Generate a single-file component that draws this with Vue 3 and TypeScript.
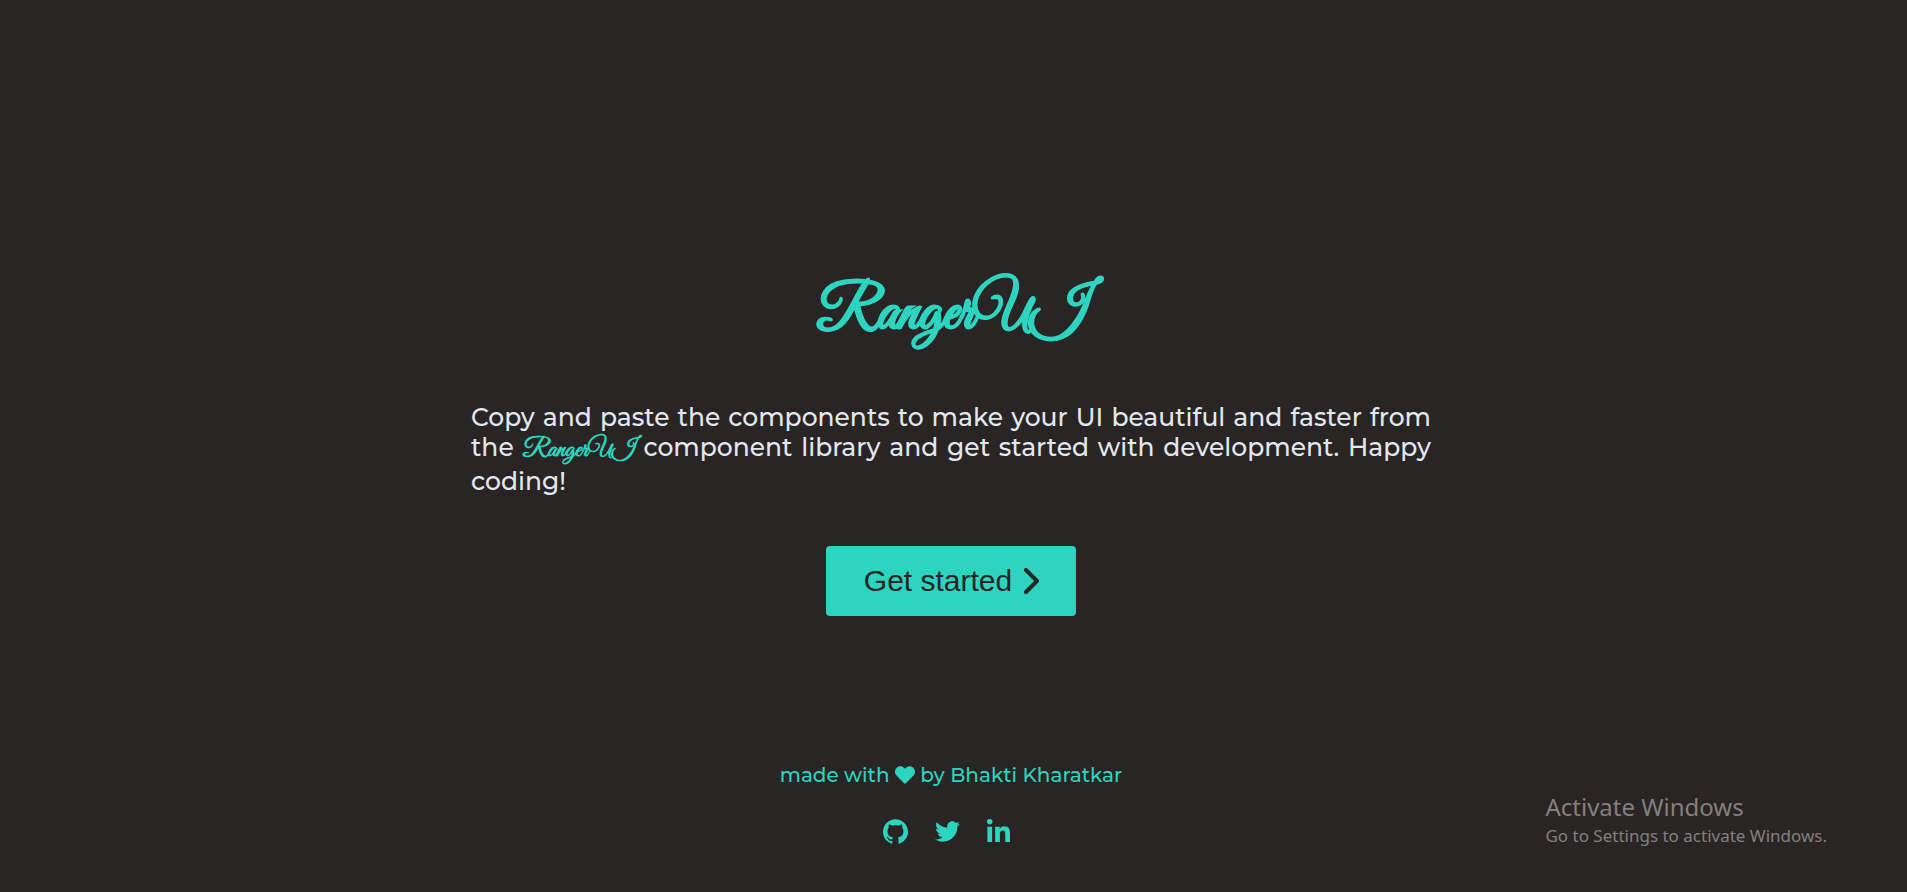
<script setup lang="ts">
interface SocialLink {
  name: string
  href: string
  viewBox: string
  path: string
}

const socials: SocialLink[] = [
  {
    name: 'GitHub',
    href: '#github',
    viewBox: '0 0 24 24',
    path: 'M12 .297c-6.63 0-12 5.373-12 12 0 5.303 3.438 9.8 8.205 11.385.6.113.82-.258.82-.577 0-.285-.01-1.04-.015-2.04-3.338.724-4.042-1.61-4.042-1.61C4.422 18.07 3.633 17.7 3.633 17.7c-1.087-.744.084-.729.084-.729 1.205.084 1.838 1.236 1.838 1.236 1.07 1.835 2.809 1.305 3.495.998.108-.776.417-1.305.76-1.605-2.665-.3-5.466-1.332-5.466-5.93 0-1.31.465-2.38 1.235-3.22-.135-.303-.54-1.523.105-3.176 0 0 1.005-.322 3.3 1.23.96-.267 1.98-.399 3-.405 1.02.006 2.04.138 3 .405 2.28-1.552 3.285-1.23 3.285-1.23.645 1.653.24 2.873.12 3.176.765.84 1.23 1.91 1.23 3.22 0 4.61-2.805 5.625-5.475 5.92.42.36.81 1.096.81 2.22 0 1.606-.015 2.896-.015 3.286 0 .315.21.69.825.57C20.565 22.092 24 17.592 24 12.297c0-6.627-5.373-12-12-12',
  },
  {
    name: 'Twitter',
    href: '#twitter',
    viewBox: '0 0 512 512',
    path: 'M459.37 151.716c.325 4.548.325 9.097.325 13.645 0 138.72-105.583 298.558-298.558 298.558-59.452 0-114.68-17.219-161.137-47.106 8.447.974 16.568 1.299 25.34 1.299 49.055 0 94.213-16.568 130.274-44.832-46.132-.975-84.792-31.188-98.112-72.772 6.498.974 12.995 1.624 19.818 1.624 9.421 0 18.843-1.3 27.614-3.573-48.081-9.747-84.143-51.98-84.143-102.985v-1.299c13.969 7.797 30.214 12.67 47.431 13.319-28.264-18.843-46.781-51.005-46.781-87.391 0-19.492 5.197-37.36 14.294-52.954 51.655 63.675 129.3 105.258 216.365 109.807-1.624-7.797-2.599-15.918-2.599-24.04 0-57.828 46.782-104.934 104.934-104.934 30.213 0 57.502 12.67 76.67 33.137 23.715-4.548 46.456-13.32 66.599-25.34-7.798 24.366-24.366 44.833-46.132 57.827 21.117-2.273 41.584-8.122 60.426-16.243-14.292 20.791-32.161 39.308-52.628 54.253z',
  },
  {
    name: 'LinkedIn',
    href: '#linkedin',
    viewBox: '0 0 448 448',
    path: 'M100.28 448H7.4V148.9h92.88zM53.79 108.1C24.09 108.1 0 83.5 0 53.8a53.79 53.79 0 0 1 107.58 0c0 29.7-24.1 54.3-53.79 54.3zM447.9 448h-92.68V302.4c0-34.7-.7-79.2-48.29-79.2-48.29 0-55.69 37.7-55.69 76.7V448h-92.78V148.9h89.08v40.8h1.3c12.4-23.5 42.69-48.3 87.88-48.3 94 0 111.28 61.9 111.28 142.3V448z',
  },
]
</script>

<template>
  <div class="page">
    <main class="hero">
      <h1 class="logo">RangerUI</h1>
      <p class="intro">
        Copy and paste the components to make your UI beautiful and faster from
        the <span class="brand">RangerUI</span> component library and get started with
        development. Happy coding!
      </p>
      <button class="cta" type="button">
        Get started
        <svg class="chevron" viewBox="0 0 16 26" aria-hidden="true">
          <path d="M2 2l11 11-11 11" />
        </svg>
      </button>
    </main>

    <footer class="footer">
      <p class="credit">
        made with
        <svg class="heart" viewBox="0 0 512 512" role="img" aria-label="love">
          <path d="M462.3 62.6C407.5 15.9 326 24.3 275.7 76.2L256 96.5l-19.7-20.3C186.1 24.3 104.5 15.9 49.7 62.6c-62.8 53.6-66.1 149.8-9.9 207.9l193.5 199.8c12.5 12.9 32.8 12.9 45.3 0l193.5-199.8c56.3-58.1 53-154.3-9.8-207.9z" />
        </svg>
        by Bhakti Kharatkar
      </p>
      <nav class="socials" aria-label="Social links">
        <a v-for="item in socials" :key="item.name" :href="item.href" :aria-label="item.name">
          <svg :class="item.name.toLowerCase()" :viewBox="item.viewBox" aria-hidden="true"><path :d="item.path" /></svg>
        </a>
      </nav>
    </footer>

    <aside class="notice">
      <p class="notice-title">Activate Windows</p>
      <p class="notice-text">Go to Settings to activate Windows.</p>
    </aside>
  </div>
</template>

<style>
body {
  margin: 0;
  background: #292524;
}
</style>

<style scoped>
.page {
  box-sizing: border-box;
  position: relative;
  display: flex;
  flex-direction: column;
  align-items: center;
  min-height: 100vh;
  padding: 271px 5px 40px 0;
  background: #292524;
  color: #e2e8f0;
  font-family: Montserrat, Inter, sans-serif;
  font-weight: 500;
}

.hero {
  display: flex;
  flex-direction: column;
  align-items: center;
  width: 100%;
}

.logo,
.brand {
  color: #2dd4bf;
  font-family: "Great Vibes", "Liberation Serif", cursive;
  font-weight: 700;
}

.logo {
  margin: 0;
  font-size: 60px;
  line-height: 88px;
  -webkit-text-stroke: 1px currentColor;
}

.intro {
  width: 100%;
  max-width: 960px;
  margin: 43px 0 50px;
  font-size: 25px;
  line-height: normal;
  text-align: justify;
}

.cta {
  display: flex;
  align-items: center;
  gap: 12px;
  height: 70px;
  padding: 0 36px 0 38px;
  border: 0;
  border-radius: 4px;
  background: #2dd4bf;
  color: #292524;
  font-family: "Liberation Sans", Arial, sans-serif;
  font-size: 30px;
  cursor: pointer;
}

.chevron {
  width: 16px;
  height: 26px;
  fill: none;
  stroke: currentColor;
  stroke-width: 4;
  stroke-linecap: round;
  stroke-linejoin: round;
}

.footer {
  display: flex;
  flex-direction: column;
  align-items: center;
  gap: 32px;
  margin-top: 147px;
  color: #2dd4bf;
}

.credit {
  margin: 0;
  font-size: 20px;
  line-height: 24px;
}

.heart {
  width: 20px;
  height: 20px;
  fill: currentColor;
  vertical-align: -3px;
}

.socials {
  display: flex;
  gap: 27px;
  padding-right: 8px;
}

.socials a {
  display: flex;
  color: inherit;
}

.socials svg {
  width: 25px;
  height: 25px;
  fill: currentColor;
}

.socials .linkedin {
  width: 23px;
  height: 23px;
}

.notice {
  position: absolute;
  right: 80px;
  bottom: 43px;
  color: #82807f;
  font-family: "Segoe UI", "Noto Sans", "Open Sans", sans-serif;
  font-weight: 400;
}

.notice p {
  margin: 0;
}

.notice-title {
  font-size: 24px;
  line-height: 32px;
}

.notice-text {
  font-size: 17px;
  line-height: 26px;
}
</style>
